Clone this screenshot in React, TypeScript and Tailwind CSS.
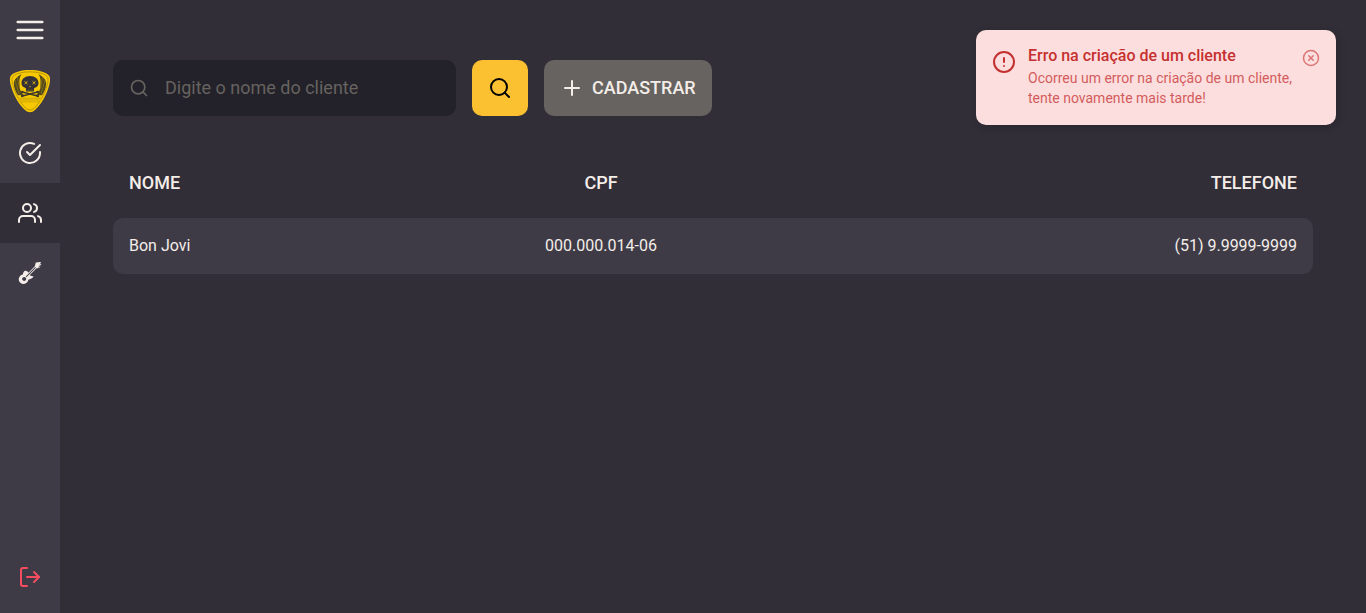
import type { ReactNode } from 'react';
import { FiAlertCircle, FiCheckCircle, FiLogOut, FiPlus, FiSearch, FiUsers, FiXCircle } from 'react-icons/fi';
import { GiGuitar } from 'react-icons/gi';

const clients = [{ name: 'Bon Jovi', cpf: '000.000.014-06', phone: '(51) 9.9999-9999' }];

function MenuIcon() {
  return (
    <svg width="28" height="20" viewBox="0 0 28 20" fill="none" stroke="currentColor" strokeWidth="2.7" strokeLinecap="round">
      <path d="M1.800 2h24.400M1.800 10h24.400M1.800 18h24.400" />
    </svg>
  );
}

function Logo() {
  return (
    <svg width="42" height="44" viewBox="0 0 42 44" fill="none">
      <path d="M21 1C12.500 1 5.500 3 2.300 6.200.3 8.200.7 12.500 2 17c2.600 9.500 7.800 18.500 14 24 3.300 2.900 6.700 2.900 10 0 6.200-5.500 11.400-14.500 14-24 1.300-4.500 1.700-8.800-.3-10.800C36.500 3 29.500 1 21 1Z" fill="#f8c900" />
      <path d="M21 2.900C13 2.900 7 4.500 4 7.300c-1.500 1.500-1.300 5-.2 9C6.500 25.500 11.300 34 17 39.300c2.700 2.300 5.300 2.300 8 0 5.700-5.300 10.500-13.800 13.200-23 1.100-4 1.300-7.500-.2-9C35 4.500 29 2.900 21 2.900Z" stroke="#8f7415" strokeWidth=".6" />
      <path d="M12.500 5C7.500 8 4.800 11 4.800 14.500c.2 4.500 2 8.500 4.200 11.800l6-.3c-3-2-4-5-4.300-8-.2-4.500-1-8.500 1.800-13ZM29.500 5c5 3 7.700 6 7.700 9.500-.2 4.500-2 8.500-4.200 11.800l-6-.3c3-2 4-5 4.300-8 .2-4.500 1-8.500-1.800-13Z" fill="#50471d" />
      <path d="m6 11 4 14M8.500 8.500l2 11.500M36 11l-4 14M33.500 8.500l-2 11.500" stroke="#c9a50c" strokeWidth=".4" />
      <path d="M21 7c-5.200 0-8.500 3-8.500 6.800 0 2.500.9 4.100 2.900 4.800l1.400.4.400 3.500h7.600l.4-3.500 1.400-.4c2-.7 2.900-2.300 2.900-4.800C29.500 10 26.200 7 21 7Z" fill="#343137" />
      <path d="m15.500 12.300 3 2.800m0-2.800-3 2.800m8-2.800 3 2.800m0-2.800-3 2.800M21 16.800v1.500" stroke="#efc309" strokeWidth=".9" />
      <path d="M19 20.500V22M21 20.500V22M23 20.500V22" stroke="#b7960f" strokeWidth=".5" />
      <path d="m13.500 23 15 4m0-4-15 4" stroke="#3c3729" strokeWidth="1.600" />
      <g fill="#3c3729">
        <circle cx="13.200" cy="23" r="1.300" />
        <circle cx="28.800" cy="23" r="1.300" />
        <circle cx="13.200" cy="27" r="1.300" />
        <circle cx="28.800" cy="27" r="1.300" />
      </g>
      <path d="M9 29h24l-1.500 3.500h-21Z" fill="#dfb603" />
      <path d="M9 29h24M11.500 33h19" stroke="#c29e0a" strokeWidth=".5" />
    </svg>
  );
}

function NavItem({ active = false, children }: { active?: boolean; children: ReactNode }) {
  return (
    <a href="#" className={active ? 'flex h-[60px] items-center justify-center bg-[#312e38]' : 'flex h-[60px] items-center justify-center'}>
      {children}
    </a>
  );
}

function Sidebar() {
  return (
    <aside className="flex w-[60px] shrink-0 flex-col bg-[#3e3b47] text-[#f4ede8]">
      <button className="flex h-[60px] items-center justify-center"><MenuIcon /></button>
      <div className="flex h-[63px] items-start justify-center pt-[9px]"><Logo /></div>
      <nav>
        <NavItem><FiCheckCircle size={24} /></NavItem>
        <NavItem active><FiUsers size={24} /></NavItem>
        <NavItem><GiGuitar size={24} /></NavItem>
      </nav>
      <button className="mt-auto mb-1.5 flex h-[60px] items-center justify-center text-[#f64c60]"><FiLogOut size={24} /></button>
    </aside>
  );
}

function Toast() {
  return (
    <div className="absolute top-[30px] right-[30px] flex h-[95px] w-[360px] rounded-[10px] bg-[#fddede] pt-4 pr-4 pl-4 text-[#c53030] shadow-[2px_2px_8px_rgba(0,0,0,0.2)]">
      <FiAlertCircle size={24} className="mt-1 mr-3 shrink-0" />
      <div className="flex-1">
        <strong className="block text-base leading-[19px] font-medium">Erro na criação de um cliente</strong>
        <p className="mt-[3px] w-[270px] text-sm leading-5 opacity-75">Ocorreu um error na criação de um cliente, tente novamente mais tarde!</p>
      </div>
      <button className="absolute top-[19px] right-4 opacity-60"><FiXCircle size={18} /></button>
    </div>
  );
}

const columns = 'grid grid-cols-[286px_404px_510px]';

export default function App() {
  return (
    <div className="relative flex h-screen overflow-hidden bg-[#312e38] font-[Roboto,sans-serif] text-[#f4ede8]">
      <Sidebar />
      <main className="flex flex-1 justify-center pt-[60px]">
        <div className="w-[1200px]">
          <div className="flex h-14 gap-4">
            <label className="flex w-[343px] items-center gap-4 rounded-[10px] bg-[#232129] px-4 text-[#666360]">
              <FiSearch size={20} />
              <input className="min-w-0 flex-1 bg-transparent text-lg outline-none placeholder:text-[#666360]" placeholder="Digite o nome do cliente" />
            </label>
            <button className="flex w-14 items-center justify-center rounded-[10px] bg-[#fcc131] text-black"><FiSearch size={24} /></button>
            <button className="flex w-[168px] items-center gap-2 rounded-[10px] bg-[#666360] pl-4 text-lg font-medium">
              <FiPlus size={24} />CADASTRAR
            </button>
          </div>
          <div className={`${columns} mt-10 h-[62px] pt-[13px] text-lg font-medium`}>
            <span className="px-4">NOME</span>
            <span className="text-center">CPF</span>
            <span className="px-4 text-right">TELEFONE</span>
          </div>
          {clients.map((client) => (
            <div key={client.cpf} className={`${columns} h-14 items-center rounded-[10px] bg-[#3e3b47]`}>
              <span className="px-4">{client.name}</span>
              <span className="text-center">{client.cpf}</span>
              <span className="px-4 text-right">{client.phone}</span>
            </div>
          ))}
        </div>
      </main>
      <Toast />
    </div>
  );
}
